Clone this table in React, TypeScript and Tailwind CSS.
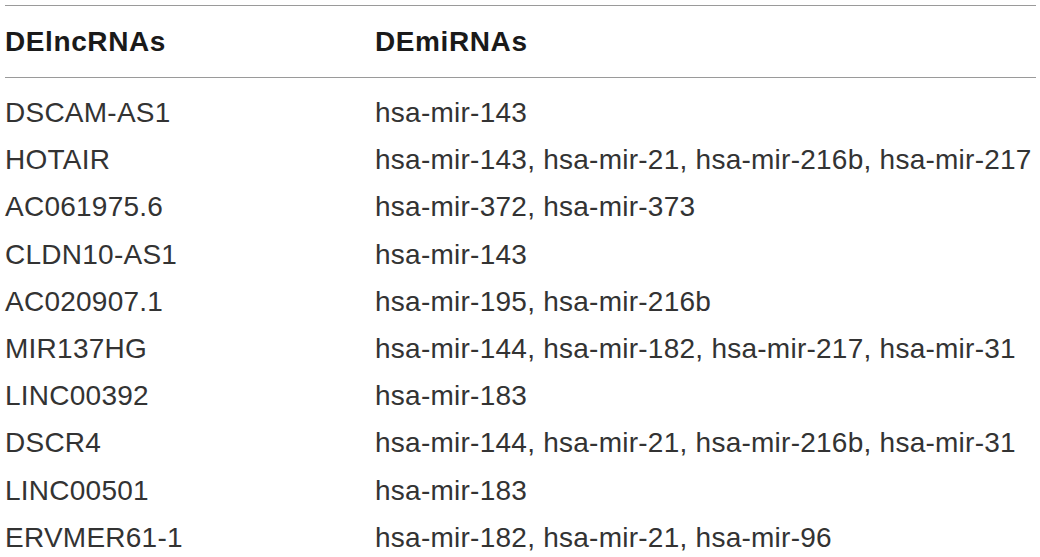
const rows: [string, string][] = [
  ["DSCAM-AS1", "hsa-mir-143"],
  ["HOTAIR", "hsa-mir-143, hsa-mir-21, hsa-mir-216b, hsa-mir-217"],
  ["AC061975.6", "hsa-mir-372, hsa-mir-373"],
  ["CLDN10-AS1", "hsa-mir-143"],
  ["AC020907.1", "hsa-mir-195, hsa-mir-216b"],
  ["MIR137HG", "hsa-mir-144, hsa-mir-182, hsa-mir-217, hsa-mir-31"],
  ["LINC00392", "hsa-mir-183"],
  ["DSCR4", "hsa-mir-144, hsa-mir-21, hsa-mir-216b, hsa-mir-31"],
  ["LINC00501", "hsa-mir-183"],
  ["ERVMER61-1", "hsa-mir-182, hsa-mir-21, hsa-mir-96"],
];

export default function App() {
  return (
    <div className="w-[1040px] h-[557px] bg-white overflow-hidden pt-[5px] pl-[5px] font-['Liberation_Sans',Arial,sans-serif]">
      <div className="w-[1031px]">
        <div className="grid grid-cols-[370px_1fr] h-[73px] items-center border-y border-[#9a9a9a] text-[28px] font-bold tracking-[0.6px] text-[#1a1a1a]">
          <div>DElncRNAs</div>
          <div>DEmiRNAs</div>
        </div>
        <div className="pt-[11px] text-[28px] tracking-[0.25px] text-[#333333] leading-[47.2px]">
          {rows.map(([lnc, mir]) => (
            <div key={lnc} className="grid grid-cols-[370px_1fr] whitespace-nowrap">
              <div>{lnc}</div>
              <div>{mir}</div>
            </div>
          ))}
        </div>
      </div>
    </div>
  );
}
